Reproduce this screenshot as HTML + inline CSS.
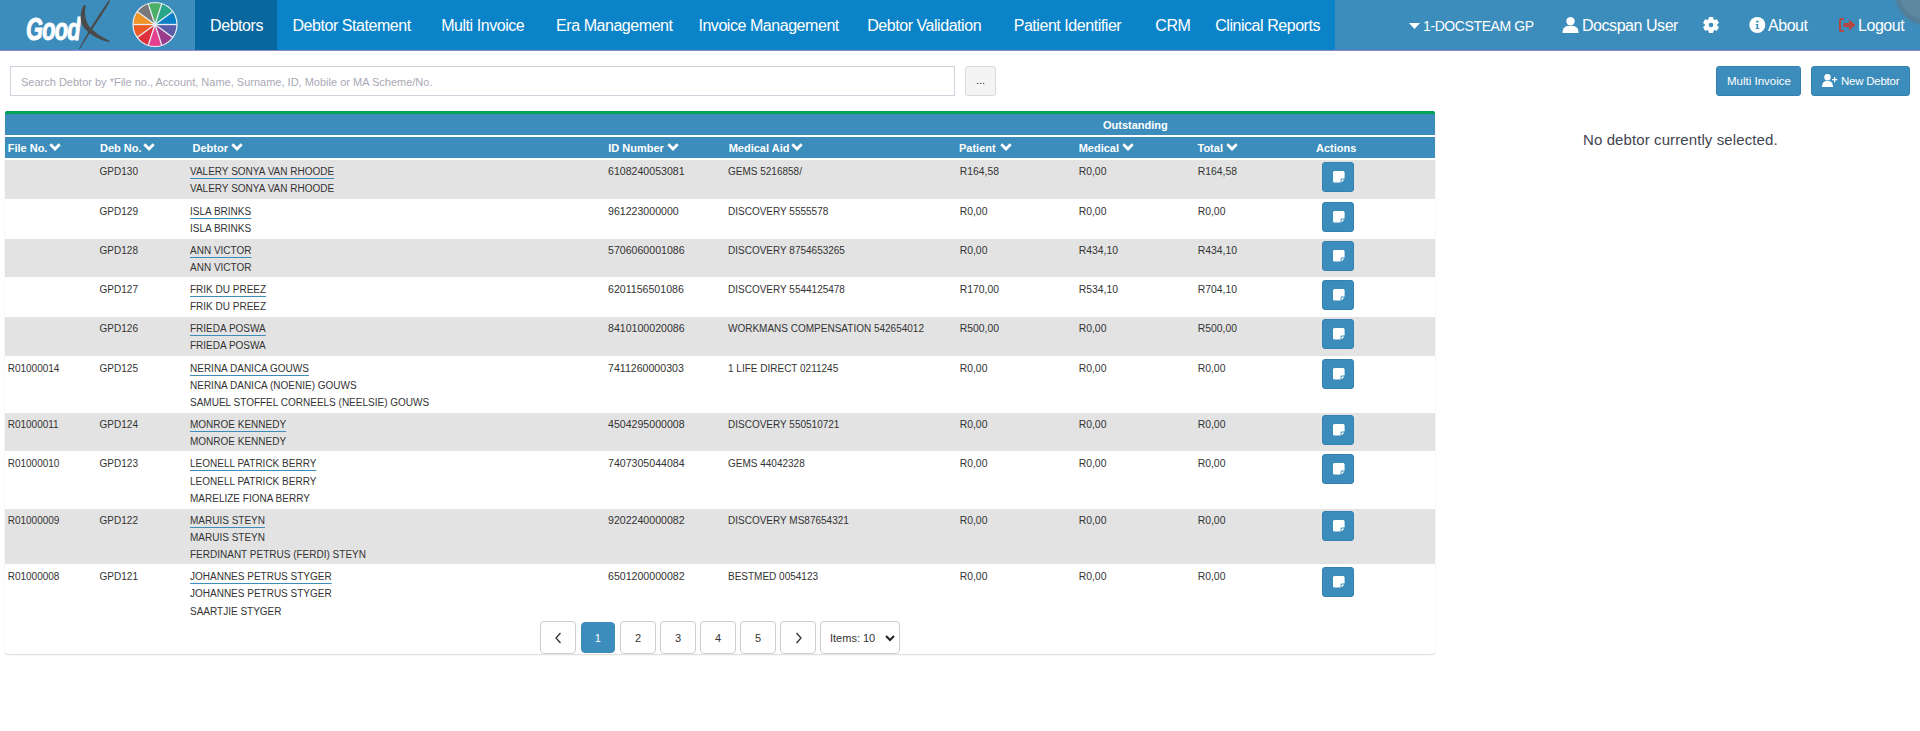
<!DOCTYPE html>
<html><head><meta charset="utf-8"><title>Debtors</title>
<style>
*{box-sizing:border-box;margin:0;padding:0}
html,body{width:1920px;height:731px;overflow:hidden;background:#fff}
body{font-family:"Liberation Sans",sans-serif;color:#333;position:relative}
.abs{position:absolute}
#nav{position:absolute;left:0;top:0;width:1920px;height:50px;background:#3c8dbc}
#navmain{position:absolute;left:195px;top:0;width:1140px;height:50px;background:#0b83c8}
#navact{position:absolute;left:195px;top:0;width:82px;height:50px;background:#09679f}
#navline{position:absolute;left:0;top:50px;width:1920px;height:1px;background:#9189d3}
.ni{position:absolute;top:1.2px;height:50px;line-height:50px;font-size:16px;letter-spacing:-0.45px;color:#fff;white-space:nowrap}
.search{position:absolute;left:10px;top:66px;width:945px;height:30px;border:1px solid #cdd3dc;background:#fff}
.search span{position:absolute;left:10px;top:1px;line-height:28px;font-size:11px;color:#a9a9b4;white-space:nowrap}
.dots{position:absolute;left:965px;top:66px;width:31px;height:30px;border:1px solid #d9d9d9;border-radius:3px;background:#f4f4f4;font-size:11px;line-height:26px;text-align:center;color:#333}
.btn{position:absolute;top:66px;height:30px;background:#3c8dbc;border:1px solid #3480b0;border-radius:3px;color:#fff;font-size:11.5px;line-height:28px;white-space:nowrap}
#tbl{position:absolute;left:5px;top:111px;width:1430px}
.green{position:absolute;left:5px;top:111px;width:1430px;height:3px;background:#00a350;border-radius:2px 2px 0 0}
.h1{position:absolute;left:5px;top:114px;width:1430px;height:20.5px;background:#3c8dbc}
.h2{position:absolute;left:5px;top:137px;width:1430px;height:21px;background:#3c8dbc}
.ht{position:absolute;font-weight:bold;font-size:11px;color:#fff;white-space:nowrap;line-height:21px;margin-top:1px}
.row{position:absolute;left:5px;width:1430px}
.row.g{background:#e3e3e3}
.c{position:absolute;font-size:10px;line-height:17px;white-space:nowrap;color:#333}
.lk{text-decoration:underline;text-decoration-color:#3c8dbc;text-underline-offset:2.5px;text-decoration-thickness:1px}
.act{position:absolute;width:32px;height:30px;background:#3c8dbc;border:1px solid #3580b3;border-radius:3px}
.pg{position:absolute;top:621px;width:36px;height:33px;border:1px solid #cfcfcf;border-radius:4px;background:#fff;font-size:11px;line-height:32px;text-align:center;color:#333}
.pg.on{background:#3c8dbc;border-color:#3c8dbc;color:#fff}
</style></head><body>
<div id="nav"></div><div id="navmain"></div><div id="navact"></div><div id="navline"></div>

<div class="abs" style="left:25.5px;top:12px;font-size:31px;font-weight:bold;font-style:italic;color:#fff;line-height:36px;transform:scaleX(0.7);transform-origin:0 0;letter-spacing:-1px;-webkit-text-stroke:1px #fff">Good</div>
<svg class="abs" style="left:0;top:0" width="195" height="50" viewBox="0 0 195 50"><path d="M83,6 C79,16 80,24 86,30 C92,36 100,40 109,42 L110,41 C101,37 94,32 89,26 C85,20 84,12 86,5 Z" fill="#4a4a4a"/><path d="M109,0 C104,8 93,22 79,49 L80,49 C95,24 106,10 110,1 Z" fill="#4a4a4a"/><path d="M155,24.5 L177.00,24.50 A22,22 0 0,0 172.80,11.57 Z" fill="#0b7fc6"/><path d="M155,24.5 L172.80,11.57 A22,22 0 0,0 161.80,3.58 Z" fill="#27a68b"/><path d="M155,24.5 L161.80,3.58 A22,22 0 0,0 148.20,3.58 Z" fill="#4cae67"/><path d="M155,24.5 L148.20,3.58 A22,22 0 0,0 137.20,11.57 Z" fill="#787878"/><path d="M155,24.5 L137.20,11.57 A22,22 0 0,0 133.00,24.50 Z" fill="#ef9425"/><path d="M155,24.5 L133.00,24.50 A22,22 0 0,0 137.20,37.43 Z" fill="#ee5b27"/><path d="M155,24.5 L137.20,37.43 A22,22 0 0,0 148.20,45.42 Z" fill="#e0303b"/><path d="M155,24.5 L148.20,45.42 A22,22 0 0,0 161.80,45.42 Z" fill="#e6408e"/><path d="M155,24.5 L161.80,45.42 A22,22 0 0,0 172.80,37.43 Z" fill="#9a3b8b"/><path d="M155,24.5 L172.80,37.43 A22,22 0 0,0 177.00,24.50 Z" fill="#5a5ca8"/><line x1="155" y1="24.5" x2="177.00" y2="24.50" stroke="#e8eef4" stroke-width="1.3"/><line x1="155" y1="24.5" x2="172.80" y2="11.57" stroke="#e8eef4" stroke-width="1.3"/><line x1="155" y1="24.5" x2="161.80" y2="3.58" stroke="#e8eef4" stroke-width="1.3"/><line x1="155" y1="24.5" x2="148.20" y2="3.58" stroke="#e8eef4" stroke-width="1.3"/><line x1="155" y1="24.5" x2="137.20" y2="11.57" stroke="#e8eef4" stroke-width="1.3"/><line x1="155" y1="24.5" x2="133.00" y2="24.50" stroke="#e8eef4" stroke-width="1.3"/><line x1="155" y1="24.5" x2="137.20" y2="37.43" stroke="#e8eef4" stroke-width="1.3"/><line x1="155" y1="24.5" x2="148.20" y2="45.42" stroke="#e8eef4" stroke-width="1.3"/><line x1="155" y1="24.5" x2="161.80" y2="45.42" stroke="#e8eef4" stroke-width="1.3"/><line x1="155" y1="24.5" x2="172.80" y2="37.43" stroke="#e8eef4" stroke-width="1.3"/><circle cx="155" cy="24.5" r="22" fill="none" stroke="#e8eef4" stroke-width="1.2"/><circle cx="155" cy="24.5" r="2" fill="#e8eef4"/></svg>
<div class="ni" style="left:210.1px">Debtors</div>
<div class="ni" style="left:292.5px">Debtor Statement</div>
<div class="ni" style="left:441.2px">Multi Invoice</div>
<div class="ni" style="left:556.1px">Era Management</div>
<div class="ni" style="left:698.4px">Invoice Management</div>
<div class="ni" style="left:867.2px">Debtor Validation</div>
<div class="ni" style="left:1013.7px">Patient Identifier</div>
<div class="ni" style="left:1155.3px">CRM</div>
<div class="ni" style="left:1215.2px">Clinical Reports</div>
<svg class="abs" style="left:1409px;top:23px" width="11" height="6" viewBox="0 0 11 6"><path d="M0,0 H11 L5.5,6 Z" fill="#fff"/></svg>
<div class="ni" style="left:1423px;font-size:14px;letter-spacing:-0.4px">1-DOCSTEAM GP</div>
<svg class="abs" style="left:1562px;top:17px" width="17" height="16" viewBox="0 0 17 16"><circle cx="8.5" cy="4.2" r="4.2" fill="#fff"/><path d="M0.5,16 C0.5,11 3,9 6,9 H11 C14,9 16.5,11 16.5,16 Z" fill="#fff"/></svg>
<div class="ni" style="left:1582px">Docspan User</div>
<svg class="abs" style="left:1703px;top:17px" width="16" height="16" viewBox="0 0 16 16"><rect x="5.6" y="0" width="4.8" height="4.5" rx="1" fill="#fff" transform="rotate(0 8 8)"/><rect x="5.6" y="0" width="4.8" height="4.5" rx="1" fill="#fff" transform="rotate(60 8 8)"/><rect x="5.6" y="0" width="4.8" height="4.5" rx="1" fill="#fff" transform="rotate(120 8 8)"/><rect x="5.6" y="0" width="4.8" height="4.5" rx="1" fill="#fff" transform="rotate(180 8 8)"/><rect x="5.6" y="0" width="4.8" height="4.5" rx="1" fill="#fff" transform="rotate(240 8 8)"/><rect x="5.6" y="0" width="4.8" height="4.5" rx="1" fill="#fff" transform="rotate(300 8 8)"/><circle cx="8" cy="8" r="6.3" fill="#fff"/><circle cx="8" cy="8" r="2.3" fill="#3c8dbc"/></svg>
<svg class="abs" style="left:1749px;top:17px" width="17" height="16" viewBox="0 0 17 16"><circle cx="8.3" cy="8" r="8" fill="#fff"/><circle cx="8.3" cy="4.6" r="1.2" fill="#3c8dbc"/><path d="M6.6,7 H9.2 V11 H10.2 V12 H6.6 V11 H7.6 V8 H6.6 Z" fill="#3c8dbc"/></svg>
<div class="ni" style="left:1768px">About</div>
<svg class="abs" style="left:1839px;top:18px" width="17" height="14" viewBox="0 0 17 14"><path d="M5,0 H2 C1,0 0,1 0,2 V12 C0,13 1,14 2,14 H5 V12 H2 V2 H5 Z" fill="#b4473f"/><path d="M10,1.5 L16.5,7 L10,12.5 V9 H4.5 V5 H10 Z" fill="#b4473f"/></svg>
<div class="ni" style="left:1858px">Logout</div>
<div class="abs" style="left:1892px;top:-44px;width:72px;height:72px;border-radius:50%;background:radial-gradient(circle closest-side,#5f879f 0,#5f879f 74%,#547c94 86%,rgba(84,124,148,0.6) 91%,rgba(61,140,189,0) 100%)"></div>
<div class="search"><span>Search Debtor by *File no., Account, Name, Surname, ID, Mobile or MA Scheme/No.</span></div>
<div class="dots">...</div>
<div class="btn" style="left:1716px;width:85px;padding-left:10px">Multi Invoice</div>
<div class="btn" style="left:1811px;width:99px;padding-left:29px;letter-spacing:-0.25px">New Debtor</div>
<svg class="abs" style="left:1822px;top:74px" width="16" height="13" viewBox="0 0 16 13"><circle cx="5.5" cy="3.2" r="3.2" fill="#fff"/><path d="M0,13 C0,9 2,7 4.5,7 H6.5 C9,7 11,9 11,13 Z" fill="#fff"/><path d="M12,3 H13.3 V5 H15.3 V6.3 H13.3 V8.3 H12 V6.3 H10 V5 H12 Z" fill="#fff"/></svg>
<div class="green"></div><div class="h1"></div><div class="h2"></div>
<div class="ht" style="left:1103px;top:113.6px;line-height:20.5px">Outstanding</div>
<div class="ht" style="left:7.7px;top:137px">File No.</div>
<svg class="abs" style="left:49px;top:143px" width="12" height="8" viewBox="0 0 12 8"><path d="M0.3,2.3 L2.3,0.3 L6,4 L9.7,0.3 L11.7,2.3 L6,8 Z" fill="#fff"/></svg>
<div class="ht" style="left:100px;top:137px">Deb No.</div>
<svg class="abs" style="left:143px;top:143px" width="12" height="8" viewBox="0 0 12 8"><path d="M0.3,2.3 L2.3,0.3 L6,4 L9.7,0.3 L11.7,2.3 L6,8 Z" fill="#fff"/></svg>
<div class="ht" style="left:192.5px;top:137px">Debtor</div>
<svg class="abs" style="left:230.5px;top:143px" width="12" height="8" viewBox="0 0 12 8"><path d="M0.3,2.3 L2.3,0.3 L6,4 L9.7,0.3 L11.7,2.3 L6,8 Z" fill="#fff"/></svg>
<div class="ht" style="left:608.2px;top:137px">ID Number</div>
<svg class="abs" style="left:667px;top:143px" width="12" height="8" viewBox="0 0 12 8"><path d="M0.3,2.3 L2.3,0.3 L6,4 L9.7,0.3 L11.7,2.3 L6,8 Z" fill="#fff"/></svg>
<div class="ht" style="left:728.7px;top:137px">Medical Aid</div>
<svg class="abs" style="left:791px;top:143px" width="12" height="8" viewBox="0 0 12 8"><path d="M0.3,2.3 L2.3,0.3 L6,4 L9.7,0.3 L11.7,2.3 L6,8 Z" fill="#fff"/></svg>
<div class="ht" style="left:959px;top:137px">Patient</div>
<svg class="abs" style="left:999.5px;top:143px" width="12" height="8" viewBox="0 0 12 8"><path d="M0.3,2.3 L2.3,0.3 L6,4 L9.7,0.3 L11.7,2.3 L6,8 Z" fill="#fff"/></svg>
<div class="ht" style="left:1078.7px;top:137px">Medical</div>
<svg class="abs" style="left:1121.5px;top:143px" width="12" height="8" viewBox="0 0 12 8"><path d="M0.3,2.3 L2.3,0.3 L6,4 L9.7,0.3 L11.7,2.3 L6,8 Z" fill="#fff"/></svg>
<div class="ht" style="left:1197.5px;top:137px">Total</div>
<svg class="abs" style="left:1225.5px;top:143px" width="12" height="8" viewBox="0 0 12 8"><path d="M0.3,2.3 L2.3,0.3 L6,4 L9.7,0.3 L11.7,2.3 L6,8 Z" fill="#fff"/></svg>
<div class="ht" style="left:1316px;top:137px">Actions</div>
<div class="abs" style="left:5px;top:111px;width:1430px;height:543px;border-radius:3px;box-shadow:0 1px 1.5px rgba(0,0,0,0.14),0 0 1px rgba(0,0,0,0.06)"></div>
<div class="row g" style="top:160.00px;height:39.00px"></div>
<div class="c" style="left:99.6px;top:163.00px">GPD130</div>
<div class="c lk" style="left:190px;top:163.00px">VALERY SONYA VAN RHOODE</div>
<div class="c" style="left:190px;top:180.00px">VALERY SONYA VAN RHOODE</div>
<div class="c" style="left:608px;top:163.00px;font-size:10.6px">6108240053081</div>
<div class="c" style="left:728px;top:163.00px">GEMS 5216858/</div>
<div class="c" style="left:959.7px;top:163.00px;font-size:10.4px">R164,58</div>
<div class="c" style="left:1078.7px;top:163.00px;font-size:10.4px">R0,00</div>
<div class="c" style="left:1197.7px;top:163.00px;font-size:10.4px">R164,58</div>
<div class="act" style="left:1322px;top:162px"></div>
<svg class="abs" style="left:1332.5px;top:170.7px" width="12" height="12" viewBox="0 0 12 12"><path d="M1.6,0 H10 C10.9,0 11.6,0.7 11.6,1.6 V7.6 H9 C8.3,7.6 7.6,8.3 7.6,9 V11.6 H1.6 C0.7,11.6 0,10.9 0,10 V1.6 C0,0.7 0.7,0 1.6,0 Z" fill="#fff"/><path d="M8.6,11.4 V9.2 C8.6,8.9 8.9,8.6 9.2,8.6 H11.4 Z" fill="#fff"/></svg>
<div class="row" style="top:199.00px;height:39.70px"></div>
<div class="c" style="left:99.6px;top:203.00px">GPD129</div>
<div class="c lk" style="left:190px;top:203.00px">ISLA BRINKS</div>
<div class="c" style="left:190px;top:220.00px">ISLA BRINKS</div>
<div class="c" style="left:608px;top:203.00px;font-size:10.6px">961223000000</div>
<div class="c" style="left:728px;top:203.00px">DISCOVERY 5555578</div>
<div class="c" style="left:959.7px;top:203.00px;font-size:10.4px">R0,00</div>
<div class="c" style="left:1078.7px;top:203.00px;font-size:10.4px">R0,00</div>
<div class="c" style="left:1197.7px;top:203.00px;font-size:10.4px">R0,00</div>
<div class="act" style="left:1322px;top:202px"></div>
<svg class="abs" style="left:1332.5px;top:210.7px" width="12" height="12" viewBox="0 0 12 12"><path d="M1.6,0 H10 C10.9,0 11.6,0.7 11.6,1.6 V7.6 H9 C8.3,7.6 7.6,8.3 7.6,9 V11.6 H1.6 C0.7,11.6 0,10.9 0,10 V1.6 C0,0.7 0.7,0 1.6,0 Z" fill="#fff"/><path d="M8.6,11.4 V9.2 C8.6,8.9 8.9,8.6 9.2,8.6 H11.4 Z" fill="#fff"/></svg>
<div class="row g" style="top:238.70px;height:38.60px"></div>
<div class="c" style="left:99.6px;top:242.00px">GPD128</div>
<div class="c lk" style="left:190px;top:242.00px">ANN VICTOR</div>
<div class="c" style="left:190px;top:259.00px">ANN VICTOR</div>
<div class="c" style="left:608px;top:242.00px;font-size:10.6px">5706060001086</div>
<div class="c" style="left:728px;top:242.00px">DISCOVERY 8754653265</div>
<div class="c" style="left:959.7px;top:242.00px;font-size:10.4px">R0,00</div>
<div class="c" style="left:1078.7px;top:242.00px;font-size:10.4px">R434,10</div>
<div class="c" style="left:1197.7px;top:242.00px;font-size:10.4px">R434,10</div>
<div class="act" style="left:1322px;top:241px"></div>
<svg class="abs" style="left:1332.5px;top:249.7px" width="12" height="12" viewBox="0 0 12 12"><path d="M1.6,0 H10 C10.9,0 11.6,0.7 11.6,1.6 V7.6 H9 C8.3,7.6 7.6,8.3 7.6,9 V11.6 H1.6 C0.7,11.6 0,10.9 0,10 V1.6 C0,0.7 0.7,0 1.6,0 Z" fill="#fff"/><path d="M8.6,11.4 V9.2 C8.6,8.9 8.9,8.6 9.2,8.6 H11.4 Z" fill="#fff"/></svg>
<div class="row" style="top:277.30px;height:39.40px"></div>
<div class="c" style="left:99.6px;top:281.00px">GPD127</div>
<div class="c lk" style="left:190px;top:281.00px">FRIK DU PREEZ</div>
<div class="c" style="left:190px;top:298.00px">FRIK DU PREEZ</div>
<div class="c" style="left:608px;top:281.00px;font-size:10.6px">6201156501086</div>
<div class="c" style="left:728px;top:281.00px">DISCOVERY 5544125478</div>
<div class="c" style="left:959.7px;top:281.00px;font-size:10.4px">R170,00</div>
<div class="c" style="left:1078.7px;top:281.00px;font-size:10.4px">R534,10</div>
<div class="c" style="left:1197.7px;top:281.00px;font-size:10.4px">R704,10</div>
<div class="act" style="left:1322px;top:280px"></div>
<svg class="abs" style="left:1332.5px;top:288.7px" width="12" height="12" viewBox="0 0 12 12"><path d="M1.6,0 H10 C10.9,0 11.6,0.7 11.6,1.6 V7.6 H9 C8.3,7.6 7.6,8.3 7.6,9 V11.6 H1.6 C0.7,11.6 0,10.9 0,10 V1.6 C0,0.7 0.7,0 1.6,0 Z" fill="#fff"/><path d="M8.6,11.4 V9.2 C8.6,8.9 8.9,8.6 9.2,8.6 H11.4 Z" fill="#fff"/></svg>
<div class="row g" style="top:316.70px;height:39.10px"></div>
<div class="c" style="left:99.6px;top:320.00px">GPD126</div>
<div class="c lk" style="left:190px;top:320.00px">FRIEDA POSWA</div>
<div class="c" style="left:190px;top:337.00px">FRIEDA POSWA</div>
<div class="c" style="left:608px;top:320.00px;font-size:10.6px">8410100020086</div>
<div class="c" style="left:728px;top:320.00px">WORKMANS COMPENSATION 542654012</div>
<div class="c" style="left:959.7px;top:320.00px;font-size:10.4px">R500,00</div>
<div class="c" style="left:1078.7px;top:320.00px;font-size:10.4px">R0,00</div>
<div class="c" style="left:1197.7px;top:320.00px;font-size:10.4px">R500,00</div>
<div class="act" style="left:1322px;top:319px"></div>
<svg class="abs" style="left:1332.5px;top:327.7px" width="12" height="12" viewBox="0 0 12 12"><path d="M1.6,0 H10 C10.9,0 11.6,0.7 11.6,1.6 V7.6 H9 C8.3,7.6 7.6,8.3 7.6,9 V11.6 H1.6 C0.7,11.6 0,10.9 0,10 V1.6 C0,0.7 0.7,0 1.6,0 Z" fill="#fff"/><path d="M8.6,11.4 V9.2 C8.6,8.9 8.9,8.6 9.2,8.6 H11.4 Z" fill="#fff"/></svg>
<div class="row" style="top:355.80px;height:56.80px"></div>
<div class="c" style="left:7.7px;top:360.00px">R01000014</div>
<div class="c" style="left:99.6px;top:360.00px">GPD125</div>
<div class="c lk" style="left:190px;top:360.00px">NERINA DANICA GOUWS</div>
<div class="c" style="left:190px;top:377.00px">NERINA DANICA (NOENIE) GOUWS</div>
<div class="c" style="left:190px;top:394.00px">SAMUEL STOFFEL CORNEELS (NEELSIE) GOUWS</div>
<div class="c" style="left:608px;top:360.00px;font-size:10.6px">7411260000303</div>
<div class="c" style="left:728px;top:360.00px">1 LIFE DIRECT 0211245</div>
<div class="c" style="left:959.7px;top:360.00px;font-size:10.4px">R0,00</div>
<div class="c" style="left:1078.7px;top:360.00px;font-size:10.4px">R0,00</div>
<div class="c" style="left:1197.7px;top:360.00px;font-size:10.4px">R0,00</div>
<div class="act" style="left:1322px;top:359px"></div>
<svg class="abs" style="left:1332.5px;top:367.7px" width="12" height="12" viewBox="0 0 12 12"><path d="M1.6,0 H10 C10.9,0 11.6,0.7 11.6,1.6 V7.6 H9 C8.3,7.6 7.6,8.3 7.6,9 V11.6 H1.6 C0.7,11.6 0,10.9 0,10 V1.6 C0,0.7 0.7,0 1.6,0 Z" fill="#fff"/><path d="M8.6,11.4 V9.2 C8.6,8.9 8.9,8.6 9.2,8.6 H11.4 Z" fill="#fff"/></svg>
<div class="row g" style="top:412.60px;height:38.40px"></div>
<div class="c" style="left:7.7px;top:416.00px">R01000011</div>
<div class="c" style="left:99.6px;top:416.00px">GPD124</div>
<div class="c lk" style="left:190px;top:416.00px">MONROE KENNEDY</div>
<div class="c" style="left:190px;top:433.00px">MONROE KENNEDY</div>
<div class="c" style="left:608px;top:416.00px;font-size:10.6px">4504295000008</div>
<div class="c" style="left:728px;top:416.00px">DISCOVERY 550510721</div>
<div class="c" style="left:959.7px;top:416.00px;font-size:10.4px">R0,00</div>
<div class="c" style="left:1078.7px;top:416.00px;font-size:10.4px">R0,00</div>
<div class="c" style="left:1197.7px;top:416.00px;font-size:10.4px">R0,00</div>
<div class="act" style="left:1322px;top:415px"></div>
<svg class="abs" style="left:1332.5px;top:423.7px" width="12" height="12" viewBox="0 0 12 12"><path d="M1.6,0 H10 C10.9,0 11.6,0.7 11.6,1.6 V7.6 H9 C8.3,7.6 7.6,8.3 7.6,9 V11.6 H1.6 C0.7,11.6 0,10.9 0,10 V1.6 C0,0.7 0.7,0 1.6,0 Z" fill="#fff"/><path d="M8.6,11.4 V9.2 C8.6,8.9 8.9,8.6 9.2,8.6 H11.4 Z" fill="#fff"/></svg>
<div class="row" style="top:451.00px;height:57.50px"></div>
<div class="c" style="left:7.7px;top:455.00px">R01000010</div>
<div class="c" style="left:99.6px;top:455.00px">GPD123</div>
<div class="c lk" style="left:190px;top:455.00px">LEONELL PATRICK BERRY</div>
<div class="c" style="left:190px;top:473.00px">LEONELL PATRICK BERRY</div>
<div class="c" style="left:190px;top:490.00px">MARELIZE FIONA BERRY</div>
<div class="c" style="left:608px;top:455.00px;font-size:10.6px">7407305044084</div>
<div class="c" style="left:728px;top:455.00px">GEMS 44042328</div>
<div class="c" style="left:959.7px;top:455.00px;font-size:10.4px">R0,00</div>
<div class="c" style="left:1078.7px;top:455.00px;font-size:10.4px">R0,00</div>
<div class="c" style="left:1197.7px;top:455.00px;font-size:10.4px">R0,00</div>
<div class="act" style="left:1322px;top:454px"></div>
<svg class="abs" style="left:1332.5px;top:462.7px" width="12" height="12" viewBox="0 0 12 12"><path d="M1.6,0 H10 C10.9,0 11.6,0.7 11.6,1.6 V7.6 H9 C8.3,7.6 7.6,8.3 7.6,9 V11.6 H1.6 C0.7,11.6 0,10.9 0,10 V1.6 C0,0.7 0.7,0 1.6,0 Z" fill="#fff"/><path d="M8.6,11.4 V9.2 C8.6,8.9 8.9,8.6 9.2,8.6 H11.4 Z" fill="#fff"/></svg>
<div class="row g" style="top:508.50px;height:55.30px"></div>
<div class="c" style="left:7.7px;top:512.00px">R01000009</div>
<div class="c" style="left:99.6px;top:512.00px">GPD122</div>
<div class="c lk" style="left:190px;top:512.00px">MARUIS STEYN</div>
<div class="c" style="left:190px;top:529.00px">MARUIS STEYN</div>
<div class="c" style="left:190px;top:546.00px">FERDINANT PETRUS (FERDI) STEYN</div>
<div class="c" style="left:608px;top:512.00px;font-size:10.6px">9202240000082</div>
<div class="c" style="left:728px;top:512.00px">DISCOVERY MS87654321</div>
<div class="c" style="left:959.7px;top:512.00px;font-size:10.4px">R0,00</div>
<div class="c" style="left:1078.7px;top:512.00px;font-size:10.4px">R0,00</div>
<div class="c" style="left:1197.7px;top:512.00px;font-size:10.4px">R0,00</div>
<div class="act" style="left:1322px;top:511px"></div>
<svg class="abs" style="left:1332.5px;top:519.7px" width="12" height="12" viewBox="0 0 12 12"><path d="M1.6,0 H10 C10.9,0 11.6,0.7 11.6,1.6 V7.6 H9 C8.3,7.6 7.6,8.3 7.6,9 V11.6 H1.6 C0.7,11.6 0,10.9 0,10 V1.6 C0,0.7 0.7,0 1.6,0 Z" fill="#fff"/><path d="M8.6,11.4 V9.2 C8.6,8.9 8.9,8.6 9.2,8.6 H11.4 Z" fill="#fff"/></svg>
<div class="row" style="top:563.80px;height:56.50px"></div>
<div class="c" style="left:7.7px;top:568.00px">R01000008</div>
<div class="c" style="left:99.6px;top:568.00px">GPD121</div>
<div class="c lk" style="left:190px;top:568.00px">JOHANNES PETRUS STYGER</div>
<div class="c" style="left:190px;top:585.00px">JOHANNES PETRUS STYGER</div>
<div class="c" style="left:190px;top:603.00px">SAARTJIE STYGER</div>
<div class="c" style="left:608px;top:568.00px;font-size:10.6px">6501200000082</div>
<div class="c" style="left:728px;top:568.00px">BESTMED 0054123</div>
<div class="c" style="left:959.7px;top:568.00px;font-size:10.4px">R0,00</div>
<div class="c" style="left:1078.7px;top:568.00px;font-size:10.4px">R0,00</div>
<div class="c" style="left:1197.7px;top:568.00px;font-size:10.4px">R0,00</div>
<div class="act" style="left:1322px;top:567px"></div>
<svg class="abs" style="left:1332.5px;top:575.7px" width="12" height="12" viewBox="0 0 12 12"><path d="M1.6,0 H10 C10.9,0 11.6,0.7 11.6,1.6 V7.6 H9 C8.3,7.6 7.6,8.3 7.6,9 V11.6 H1.6 C0.7,11.6 0,10.9 0,10 V1.6 C0,0.7 0.7,0 1.6,0 Z" fill="#fff"/><path d="M8.6,11.4 V9.2 C8.6,8.9 8.9,8.6 9.2,8.6 H11.4 Z" fill="#fff"/></svg>
<div class="pg" style="left:540px"><svg width="9" height="12" viewBox="0 0 9 12" style="margin-top:10px"><path d="M6.5,1 L2,6 L6.5,11" stroke="#333" stroke-width="1.3" fill="none"/></svg></div>
<div class="pg on" style="left:580.7px;top:621.5px;width:34.4px;height:31.8px;line-height:30.8px">1</div>
<div class="pg" style="left:620px">2</div>
<div class="pg" style="left:660px">3</div>
<div class="pg" style="left:700px">4</div>
<div class="pg" style="left:740px">5</div>
<div class="pg" style="left:780px"><svg width="9" height="12" viewBox="0 0 9 12" style="margin-top:10px"><path d="M2.5,1 L7,6 L2.5,11" stroke="#333" stroke-width="1.3" fill="none"/></svg></div>
<div class="pg" style="left:820px;width:80px;text-align:left;padding-left:9px">Items: 10<svg class="abs" style="left:64px;top:12.5px" width="10" height="7" viewBox="0 0 10 7"><path d="M1,1 L5,5 L9,1" stroke="#222" stroke-width="2" fill="none"/></svg></div>

<div class="abs" style="left:1583px;top:129.5px;font-size:15px;line-height:20px;color:#3f4450;white-space:nowrap;letter-spacing:0.1px">No debtor currently selected.</div>
</body></html>
